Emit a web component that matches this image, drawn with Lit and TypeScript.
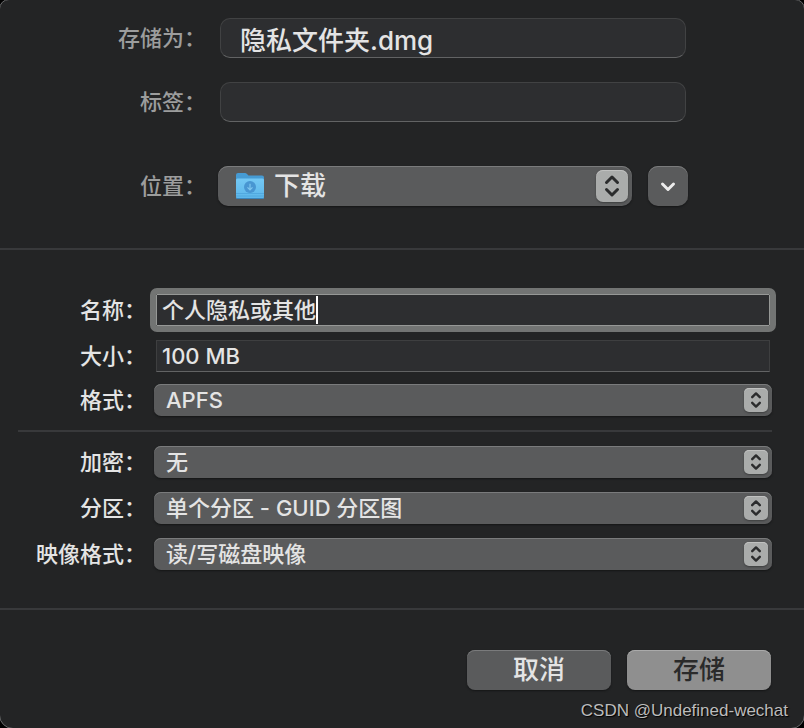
import { LitElement, html, css, svg } from "lit";
import { customElement } from "lit/decorators.js";

const largeStepper = html`
  <svg class="stepper large" viewBox="0 0 32 32" aria-hidden="true">
    <path d="M10.500 12.500 L16 7 L21.500 12.500 M10.500 19.500 L16 25 L21.500 19.500" />
  </svg>
`;

const smallStepper = html`
  <svg class="stepper" viewBox="0 0 24 24" aria-hidden="true">
    <path d="M8.2 9.2 L12 5.4 L15.8 9.2 M8.2 14.8 L12 18.6 L15.8 14.8" />
  </svg>
`;

const folderShapes = svg`
  <defs>
    <linearGradient id="front" x1="0" y1="0" x2="0" y2="1">
      <stop offset="0" stop-color="#74c8f4" />
      <stop offset="1" stop-color="#5cb6ea" />
    </linearGradient>
  </defs>
  <path d="M1 3 Q1 1 3 1 H10 Q11 1 12 2 L13.500 3.500 H27 Q29 3.500 29 5.500 V12 H1 Z" fill="#469bd3" />
  <path d="M1 8 Q1 6.500 2.500 6.500 H27.500 Q29 6.500 29 8 V25 Q29 27 27 27 H3 Q1 27 1 25 Z" fill="url(#front)" />
  <path d="M1 21.500 H29 M1 24 H29" stroke="#4ca4dc" stroke-width="0.800" />
  <path d="M1.500 26.500 H28.500" stroke="#3a86bd" stroke-width="1" />
  <circle cx="15" cy="15" r="6" fill="#4896d2" />
  <path d="M15 11.800 V17.500 M12.500 15.300 L15 17.800 L17.500 15.300" fill="none" stroke="#7fc6ef" stroke-width="1.200" />
`;

@customElement("app-root")
export class AppRoot extends LitElement {
  static styles = css`
    :host {
      display: block;
      overflow: hidden;
      min-height: 100vh;
      background: #000;
      color: #e4e4e4;
      font: 500 22px/32px Inter, "Noto Sans CJK SC", sans-serif;
    }
    * {
      box-sizing: border-box;
    }
    .dialog {
      margin: -1px;
      border: 1px solid #68696a;
      border-radius: 10px 10px 14px 14px;
      background: #232425;
    }
    .row {
      display: grid;
      align-items: center;
    }
    label {
      text-align: right;
      white-space: nowrap;
    }
    input,
    select,
    button {
      min-width: 0;
      margin: 0;
      border: 0;
      outline: 0;
      color: inherit;
      font: inherit;
    }
    select,
    button {
      background: #5a5b5c;
      box-shadow: inset 0 1px #7a7b7c, 0 1px 2px #151617;
    }
    .place {
      display: flex;
      flex-direction: column;
      padding: 18px 116px 42px 0;
      border-bottom: 2px solid #38393b;
    }
    .place .row {
      grid-template-columns: 206px 1fr;
      column-gap: 12px;
      margin-bottom: 24px;
    }
    .place .row:last-child {
      margin: 20px 0 0;
    }
    .place label {
      color: #9c9d9d;
      line-height: 36px;
    }
    .place input {
      height: 40px;
      margin: 0 2px;
      padding: 0 19px;
      border: 1px solid #414243;
      border-bottom-color: #626364;
      border-radius: 10px;
      background: #2d2e30;
      font-size: 26px;
    }
    .where {
      display: flex;
      gap: 16px;
    }
    .menu {
      position: relative;
      flex: 1;
      display: grid;
    }
    select {
      appearance: none;
      height: 32px;
      padding: 0 36px 0 12px;
      border-radius: 7px;
    }
    .where select {
      height: 40px;
      padding-left: 56px;
      border-radius: 10px;
      font-size: 26px;
    }
    .folder {
      position: absolute;
      left: 17px;
      top: 6px;
      width: 30px;
      height: 28px;
      pointer-events: none;
    }
    .stepper {
      position: absolute;
      right: 4px;
      top: 4px;
      width: 24px;
      height: 24px;
      border-radius: 5px;
      background: #aaacab;
      box-shadow: inset 0 1px #c0c1c0, 0 1px 2px #3c3d3e;
      fill: none;
      stroke: #2b2c2d;
      stroke-width: 2.4;
      stroke-linecap: round;
      stroke-linejoin: round;
      pointer-events: none;
    }
    .large {
      width: 32px;
      height: 32px;
      border-radius: 7px;
      stroke-width: 3;
    }
    .expand {
      display: grid;
      place-items: center;
      width: 40px;
      height: 40px;
      padding: 0;
      border-radius: 10px;
    }
    .chevron {
      width: 16px;
      height: 16px;
      fill: none;
      stroke: #ececec;
      stroke-width: 3;
      stroke-linecap: round;
      stroke-linejoin: round;
    }
    .image {
      padding: 44px 32px 38px 18px;
      border-bottom: 2px solid #38393b;
    }
    .group {
      display: grid;
      gap: 14px;
    }
    .image .row {
      grid-template-columns: 128px 1fr;
      column-gap: 8px;
    }
    .options {
      margin-top: 12px;
    }
    .rule {
      width: 100%;
      height: 2px;
      margin: 0;
      border: 0;
      background: #38393b;
    }
    .field {
      display: flex;
      align-items: center;
      height: 32px;
      margin: 0 2px;
      padding: 0 5px;
      border: 1px solid #3e3f40;
      border-bottom-color: #626364;
      background: #2d2e30;
    }
    .field input {
      flex: 1;
      height: 28px;
      padding: 0;
      background: none;
    }
    .focused {
      border-color: #969896;
      outline: 6px solid #727473;
      border-radius: 1px;
    }
    .focused input {
      flex: none;
      field-sizing: content;
      max-width: 100%;
      caret-color: transparent;
    }
    .caret {
      width: 2px;
      height: 28px;
      background: #fff;
    }
    .actions {
      display: flex;
      justify-content: flex-end;
      gap: 16px;
      padding: 40px 33px 11px;
    }
    .action {
      width: 144px;
      height: 40px;
      padding: 0;
      border-radius: 8px;
      font-size: 26px;
      line-height: 40px;
    }
    .primary {
      background: #8f8f8f;
      box-shadow: inset 0 1px #aaa, 0 1px 2px #151617;
      color: #2a2a2a;
    }
    .credit {
      margin: 0;
      padding: 0 16px 7px;
      color: #bcbcbc;
      font: 400 17px/20px "Liberation Sans", sans-serif;
      text-align: right;
      text-shadow: 1px 1px 1px #000;
    }
  `;

  private option(id: string, label: string, value: string) {
    return html`
      <div class="row">
        <label for=${id}>${label}</label>
        <div class="menu">
          <select id=${id}><option>${value}</option></select>
          ${smallStepper}
        </div>
      </div>
    `;
  }

  render() {
    return html`
      <form class="dialog" @submit=${(e: Event) => e.preventDefault()}>
        <section class="place">
          <div class="row">
            <label for="file">存储为：</label>
            <input id="file" type="text" value="隐私文件夹.dmg" />
          </div>
          <div class="row">
            <label for="tags">标签：</label>
            <input id="tags" type="text" />
          </div>
          <div class="row">
            <label for="where">位置：</label>
            <div class="where">
              <div class="menu">
                <select id="where"><option>下载</option></select>
                <svg class="folder" viewBox="0 0 30 28" aria-hidden="true">${folderShapes}</svg>
                ${largeStepper}
              </div>
              <button class="expand" type="button" aria-label="展开">
                <svg class="chevron" viewBox="0 0 16 16" aria-hidden="true">
                  <path d="M2.500 6 L8 11.500 L13.500 6" />
                </svg>
              </button>
            </div>
          </div>
        </section>
        <section class="image">
          <div class="group">
            <div class="row">
              <label for="name">名称：</label>
              <div class="field focused">
                <input id="name" type="text" value="个人隐私或其他" /><span class="caret"></span>
              </div>
            </div>
            <div class="row">
              <label for="size">大小：</label>
              <div class="field"><input id="size" type="text" value="100 MB" /></div>
            </div>
          </div>
          <div class="group options">
            ${this.option("format", "格式：", "APFS")}
            <hr class="rule" />
            ${this.option("encryption", "加密：", "无")}
            ${this.option("partition", "分区：", "单个分区 - GUID 分区图")}
            ${this.option("imageFormat", "映像格式：", "读/写磁盘映像")}
          </div>
        </section>
        <div class="actions">
          <button class="action" type="button">取消</button>
          <button class="action primary" type="submit">存储</button>
        </div>
        <p class="credit">CSDN @Undefined-wechat</p>
      </form>
    `;
  }
}
